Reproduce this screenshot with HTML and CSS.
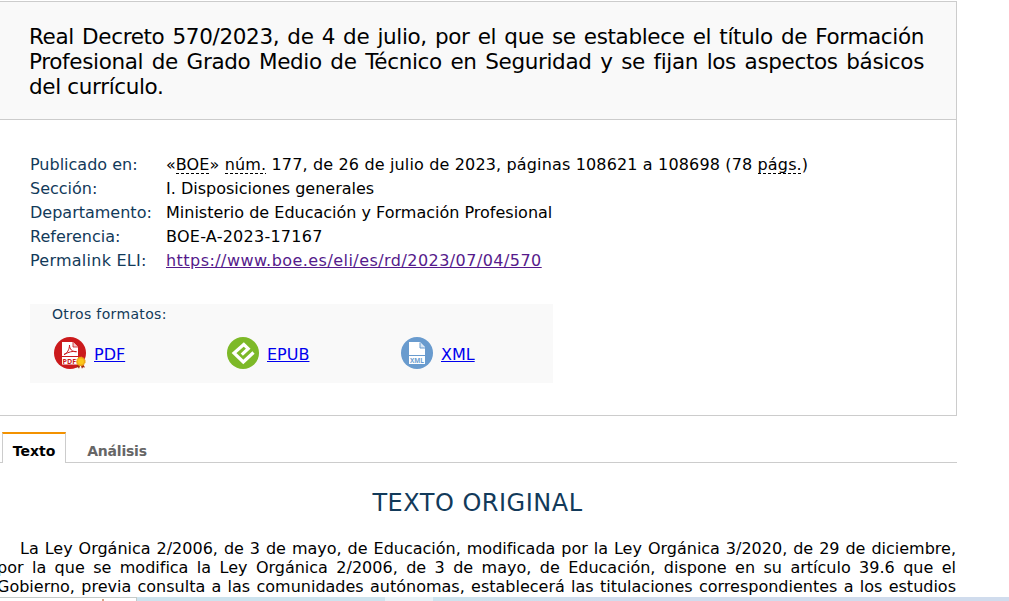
FILE: index.html
```html
<!DOCTYPE html>
<html lang="es">
<head>
  <meta charset="UTF-8">
  <title>BOE-A-2023-17167 Real Decreto 570/2023</title>
  <meta name="viewport" content="width=device-width, initial-scale=1.0">
  <link rel="stylesheet" href="styles.css">
</head>
<body>
  <main class="contenido">
    <section class="documento">
      <h1 class="documento-tit">Real Decreto 570/2023, de 4 de julio, por el que se establece el título de Formación Profesional de Grado Medio de Técnico en Seguridad y se fijan los aspectos básicos del currículo.</h1>
      <div class="metadatos">
        <dl>
          <dt>Publicado en:</dt>
          <dd class="publicado">«<abbr>BOE</abbr>» <abbr>núm.</abbr> 177, de 26 de julio de 2023, páginas 108621 a 108698 (78 <abbr>págs.</abbr>)</dd>
          <dt>Sección:</dt>
          <dd>I. Disposiciones generales</dd>
          <dt>Departamento:</dt>
          <dd>Ministerio de Educación y Formación Profesional</dd>
          <dt>Referencia:</dt>
          <dd class="referencia">BOE-A-2023-17167</dd>
          <dt class="permalink">Permalink ELI:</dt>
          <dd><a class="visitado" href="#">https://www.boe.es/eli/es/rd/2023/07/04/570</a></dd>
        </dl>
        <div class="formatos">
          <p>Otros formatos:</p>
          <ul>
            <li>
              <svg width="32" height="32" viewBox="0 0 32 32">
                <circle cx="16" cy="16" r="16" fill="#cb1a1c"/>
                <path d="M8 5h11l5 5v9H8z" fill="#fff"/>
                <path d="M19 5v5h5" fill="#f4c9c9" stroke="#cb1a1c" stroke-width=".8"/>
                <path d="M10 17.500c3-1 5.500-5 5.500-9.500 0 4 2.500 7 7 6.700-4-1-7.500.3-12.500 2.800z" fill="none" stroke="#cb1a1c" stroke-width="1"/>
                <path d="M8 20h16v7.500H8z" fill="#fff"/>
                <text class="ico-pdf" x="8.500" y="26.500" textLength="13.500" lengthAdjust="spacingAndGlyphs">PDF</text>
                <path d="M24 27l-2 3.500 2-.3 1 1.500 1.500-3.700zM29 27l2 3.500-2-.3-1 1.500-1.500-3.700z" fill="#a32a12"/>
                <circle cx="26.800" cy="24.500" r="4.400" fill="#f0a818" stroke="#f0a818" stroke-dasharray="1.500 1"/>
                <circle cx="26.800" cy="24.500" r="3" fill="#fbc81c"/>
              </svg>
              <a href="#">PDF</a>
            </li>
            <li>
              <svg width="32" height="32" viewBox="0 0 32 32">
                <circle cx="16" cy="16" r="16" fill="#7db928"/>
                <path d="M11.500 16.500l4.700 4.700 8.800-8.700" fill="none" stroke="#7db928" stroke-width="2"/>
                <path d="M26.500 15.500L16.300 25 7 16l9.800-8.500 4.400 4.200-6.400 6" fill="none" stroke="#fff" stroke-width="3.200"/>
              </svg>
              <a href="#">EPUB</a>
            </li>
            <li>
              <svg width="32" height="32" viewBox="0 0 32 32">
                <circle cx="16" cy="16" r="16" fill="#699bce"/>
                <path d="M8 5h11l5 5v8H8z" fill="#fff"/>
                <path d="M19 5.500V11h5" fill="#d5e4f3" stroke="#699bce"/>
                <path d="M8 19h16v8H8z" fill="#fff"/>
                <text class="ico-xml" x="9" y="25.500" textLength="14" lengthAdjust="spacingAndGlyphs">XML</text>
              </svg>
              <a href="#">XML</a>
            </li>
          </ul>
        </div>
      </div>
    </section>
    <nav class="pestanas">
      <a class="activa">Texto</a>
      <a>Análisis</a>
    </nav>
    <article class="texto">
      <h2>TEXTO ORIGINAL</h2>
      <p>La Ley Orgánica 2/2006, de 3 de mayo, de Educación, modificada por la Ley Orgánica 3/2020, de 29 de diciembre, por la que se modifica la Ley Orgánica 2/2006, de 3 de mayo, de Educación, dispone en su artículo 39.6 que el Gobierno, previa consulta a las comunidades autónomas, establecerá las titulaciones correspondientes a los estudios</p>
    </article>
  </main>
  <footer class="barra">
    <span class="tarea"></span>
    <span class="hueco"></span>
  </footer>
</body>
</html>
```

FILE: styles.css
```css
body {
  margin: 0;
  height: 601px;
  display: flex;
  flex-direction: column;
  overflow: hidden;
  background: #fff;
  color: #000;
  font: 16px Verdana, "DejaVu Sans", sans-serif;
}
.contenido {
  width: 957px;
  height: 597px;
  overflow: hidden;
}
.documento {
  box-sizing: border-box;
  height: 415px;
  margin-top: 1px;
  border: 1px solid #ccc;
  border-left: 0;
}
.documento-tit {
  margin: 0;
  padding: 22px 32px 20px 29px;
  height: 75px;
  border-bottom: 1px solid #ccc;
  background: #f9f9f9;
  font-size: 21.5px;
  font-weight: normal;
  letter-spacing: -0.35px;
  line-height: 25px;
  text-align: justify;
}
.metadatos {
  padding: 33px 30px 0;
}
dl {
  display: grid;
  grid-template-columns: 136px 1fr;
  margin: 0;
  line-height: 24px;
  white-space: nowrap;
}
dt {
  color: #123a5a;
}
dd {
  margin: 0;
}
.publicado {
  letter-spacing: 0.15px;
}
.referencia,
.permalink {
  letter-spacing: 0.25px;
}
abbr {
  background: repeating-linear-gradient(90deg, #000 0 3px, transparent 3px 5px) bottom / 100% 1px no-repeat;
}
a {
  color: #00e;
}
.visitado {
  color: #551a8b;
  letter-spacing: 0.45px;
}
.formatos {
  box-sizing: border-box;
  width: 523px;
  height: 79px;
  margin-top: 31px;
  padding: 0 24px;
  background: #f9f9f9;
}
.formatos p {
  margin: 0 0 13px -2px;
  color: #123a5a;
  font-size: 14px;
  letter-spacing: 0.35px;
  line-height: 20px;
}
.formatos ul {
  display: grid;
  grid-template-columns: 173px 174px 1fr;
  margin: 0;
  padding: 0;
  list-style: none;
}
.formatos li {
  display: flex;
  gap: 8px;
  line-height: 35px;
}
.ico-pdf,
.ico-xml {
  font: bold 7px "Open Sans", sans-serif;
  fill: #cb1a1c;
}
.ico-xml {
  fill: #699bce;
}
.pestanas {
  display: flex;
  height: 31px;
  margin-top: 16px;
  padding-left: 2px;
  font-size: 14px;
  font-weight: bold;
  background: linear-gradient(#ccc, #ccc) bottom / 100% 1px no-repeat;
}
.pestanas a {
  box-sizing: border-box;
  width: 84px;
  padding-top: 2px;
  letter-spacing: -0.2px;
  line-height: 34px;
  text-align: center;
  color: #666;
}
.pestanas .activa {
  width: 64px;
  margin-right: 9px;
  border: 1px solid #ccc;
  border-top: 2px solid #f39200;
  border-bottom: 0;
  padding-top: 0;
  background: #fff;
  letter-spacing: 0;
  color: #000;
}
.texto h2 {
  margin: 25px 0 0;
  color: #123a5a;
  font-size: 24px;
  font-weight: normal;
  letter-spacing: 0.5px;
  line-height: 30px;
  text-align: center;
  text-indent: -2px;
}
.texto p {
  width: 959px;
  margin: 21px 0 0 -3px;
  line-height: 19px;
  text-align: justify;
  text-align-last: justify;
  text-indent: 23px;
}
.barra {
  display: flex;
  height: 4px;
  background: linear-gradient(90deg, #cde3ee 45%, #d0dced 60%);
}
.tarea {
  box-sizing: border-box;
  width: 137px;
  border-top: 1px solid #c4cac8;
  border-right: 1px solid #c4cac8;
  background: linear-gradient(#d9a184, #d9a184) 102px 1px / 2px 2px no-repeat #fff;
}
.hueco {
  width: 48px;
  margin-left: 248px;
  background: #e8f2f7;
}
```
